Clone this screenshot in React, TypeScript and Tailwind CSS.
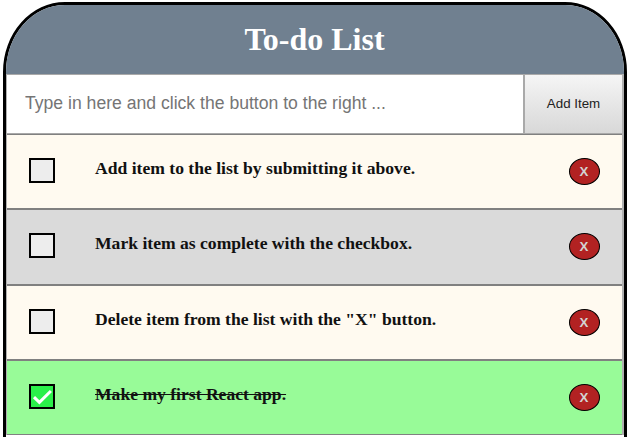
import { useState } from "react";

type Item = { text: string; done: boolean; look: string };

const initial: Item[] = [
  { text: "Add item to the list by submitting it above.", done: false, look: "h-[75px] border-b-2 bg-[#fffaf0]" },
  { text: "Mark item as complete with the checkbox.", done: false, look: "h-[76px] border-b-2 bg-[#dadada]" },
  { text: 'Delete item from the list with the "X" button.', done: false, look: "h-[75px] border-b-2 bg-[#fffaf0]" },
  { text: "Make my first React app.", done: true, look: "h-[74px] border-b bg-[#98fb98]" },
];

function Row({ item, onToggle, onDelete }: { item: Item; onToggle: () => void; onDelete: () => void }) {
  return (
    <li className={`flex items-start border-[#808080] pl-[22px] pr-[22.5px] ${item.look}`}>
      <button
        onClick={onToggle}
        aria-label="Toggle item"
        className={`mt-[23px] flex h-[25px] w-[26px] shrink-0 items-center justify-center border-2 border-black ${item.done ? "bg-[#2bf04a]" : "bg-[#ededed]"}`}
      >
        {item.done && (
          <svg viewBox="0 0 22 21" className="h-[21px] w-[22px] shrink-0" fill="none" stroke="white" strokeWidth="3">
            <path d="M3 11.2 8.4 16.4 19.9 5" />
          </svg>
        )}
      </button>
      <span
        className={`ml-10 mt-[22px] grow whitespace-nowrap text-[17.6px] leading-[22px] font-bold text-[#111111] ${item.done ? "line-through" : ""}`}
      >
        {item.text}
      </span>
      <button
        onClick={onDelete}
        className="mt-[23px] flex h-[27px] w-[31px] shrink-0 items-center justify-center rounded-[50%] border border-black bg-[#b22222] font-['Liberation_Sans',Arial,sans-serif] text-[13.33px] font-bold text-[#d3d3d3]"
      >
        X
      </button>
    </li>
  );
}

export default function App() {
  const [items, setItems] = useState(initial);
  return (
    <div className="h-[437px] overflow-hidden bg-white pl-[3px] pt-[2px] font-['Liberation_Serif','Times_New_Roman',serif]">
      <div className="h-[500px] w-[624px] overflow-hidden rounded-t-[62px_70px] border-[3px] border-black bg-white">
        <h1 className="flex h-[69px] items-center justify-center bg-[#708090] pr-px pb-px text-[32px] font-bold text-white">
          To-do List
        </h1>
        <div className="border-l border-r-2 border-[#b0b0b0]">
          <form className="flex h-[61px] border-b border-[#808080]" onSubmit={(e) => e.preventDefault()}>
            <input
              placeholder="Type in here and click the button to the right ..."
              className="min-w-0 grow border-y border-[#a9a9a9] pl-[18px] pb-[2px] font-['Liberation_Sans',Arial,sans-serif] text-[17.6px] outline-none placeholder:text-[#757575]"
            />
            <button className="w-[99px] border-y border-l-2 border-[#a9a9a9] bg-linear-to-b from-[#f5f5f5] to-[#d8d8d8] font-['Liberation_Sans',Arial,sans-serif] text-[13.33px] text-[#222222]">
              Add Item
            </button>
          </form>
          <ul>
            {items.map((item, i) => (
              <Row
                key={item.text}
                item={item}
                onToggle={() => setItems(items.map((x, j) => (j === i ? { ...x, done: !x.done } : x)))}
                onDelete={() => setItems(items.filter((_, j) => j !== i))}
              />
            ))}
          </ul>
        </div>
      </div>
    </div>
  );
}
